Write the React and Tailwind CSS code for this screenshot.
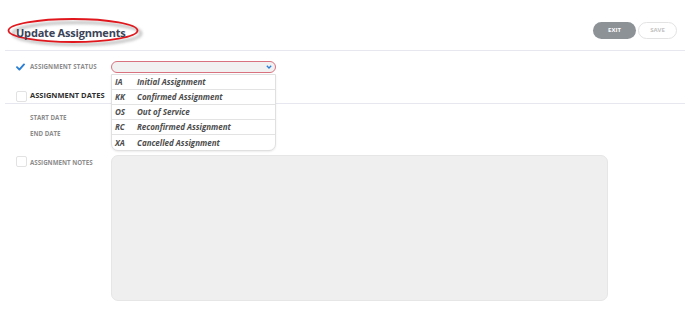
import React from 'react'

const statuses = [
  { code: 'IA', name: 'Initial Assignment' },
  { code: 'KK', name: 'Confirmed Assignment' },
  { code: 'OS', name: 'Out of Service' },
  { code: 'RC', name: 'Reconfirmed Assignment' },
  { code: 'XA', name: 'Cancelled Assignment' },
]

function Check() {
  return (
    <svg width="9" height="8" viewBox="0 0 9 8">
      <path d="M1 4.2 L3.4 6.6 L8 1.4" fill="none" stroke="#2a7fd4" strokeWidth="1.9" strokeLinecap="round" strokeLinejoin="round" />
    </svg>
  )
}

function Box() {
  return <div className="w-[11px] h-[11px] rounded-[2px] border border-[#e2e2e2] bg-white" />
}

function App() {
  return (
    <div className="w-[690px] h-[313px] bg-white font-['Open_Sans',sans-serif] overflow-hidden">
      {/* Header */}
      <div className="flex items-start justify-between h-[51px] mx-[5px] border-b border-[#e6e7ef] pl-[11px] pr-[8px] pt-[22px]">
        <div className="relative mt-[1px] h-[16px] leading-[16px]">
          <svg className="absolute left-[-8px] top-[-5px] overflow-visible" width="134" height="30" viewBox="0 0 134 30">
            <defs>
              <filter id="sh" x="-20%" y="-40%" width="140%" height="180%">
                <feGaussianBlur stdDeviation="1.6" />
              </filter>
            </defs>
            <ellipse cx="69" cy="15.5" rx="64" ry="11" fill="none" stroke="#9a9a9a" strokeWidth="2.5" filter="url(#sh)" opacity="0.7" />
            <ellipse cx="65" cy="12.5" rx="64.5" ry="11.5" fill="none" stroke="#e0171d" strokeWidth="1.8" />
          </svg>
          <span className="relative text-[11px] font-bold text-[#3b4458] tracking-[-0.2px]">Update Assignments</span>
        </div>
        <div className="flex items-center gap-[2px]">
          <div className="w-[43px] h-[17px] rounded-full bg-[#8d9297] text-white text-[6px] font-bold flex items-center justify-center">EXIT</div>
          <div className="w-[39px] h-[17px] rounded-full border border-[#e3e3e3] text-[#c3c3c3] text-[6px] font-bold flex items-center justify-center">SAVE</div>
        </div>
      </div>

      {/* Assignment status */}
      <div className="flex items-center mt-[10px] h-[12px]">
        <div className="w-[111px] flex items-center pl-[16px] gap-[5px]">
          <Check />
          <span className="text-[6.2px] font-bold text-[#8c8c8c] tracking-[0.1px]">ASSIGNMENT STATUS</span>
        </div>
        <div className="relative w-[165px] h-[12px] rounded-full border border-[#d9727f] bg-[#f1f1f1] flex items-center justify-end pr-[3px]">
          <svg width="6" height="4" viewBox="0 0 6 4">
            <path d="M0.8 0.8 L3 3 L5.2 0.8" fill="none" stroke="#2a7fd4" strokeWidth="1.3" />
          </svg>
          <div className="absolute left-[-1px] top-[12px] w-[165px] bg-white border border-[#e0e0e0] rounded-b-[7px] shadow-[0_1px_2px_rgba(0,0,0,0.08)] z-10">
            {statuses.map((s, i) => (
              <div
                key={s.code}
                className={`flex items-center h-[15px] pl-[3px] text-[8px] font-bold italic text-[#4d4d4d] ${i < statuses.length - 1 ? 'border-b border-[#e3e3e3]' : ''}`}
              >
                <span className="w-[22px]">{s.code}</span>
                <span>{s.name}</span>
              </div>
            ))}
          </div>
        </div>
      </div>

      {/* Assignment dates */}
      <div className="flex items-center mt-[17px] pl-[16px] gap-[3px] h-[12px]">
        <Box />
        <span className="text-[7.5px] font-bold text-[#2f2f2f]">ASSIGNMENT DATES</span>
      </div>
      <div className="mx-[5px] mt-[1px] border-b border-[#e6e7ef]" />
      <div className="pl-[30px] pt-[10px] flex flex-col gap-[9px] text-[6.2px] font-bold text-[#8c8c8c]">
        <div className="h-[7px] flex items-center">START DATE</div>
        <div className="h-[7px] flex items-center">END DATE</div>
      </div>

      {/* Assignment notes */}
      <div className="flex mt-[18px]">
        <div className="w-[111px] flex items-start pl-[16px] gap-[3px] pt-[1px]">
          <Box />
          <span className="text-[6.2px] font-bold text-[#8c8c8c] mt-[2px]">ASSIGNMENT NOTES</span>
        </div>
        <div className="w-[497px] h-[146px] rounded-[7px] bg-[#efefef] border border-[#e6e6e6]" />
      </div>
    </div>
  )
}

export default App
